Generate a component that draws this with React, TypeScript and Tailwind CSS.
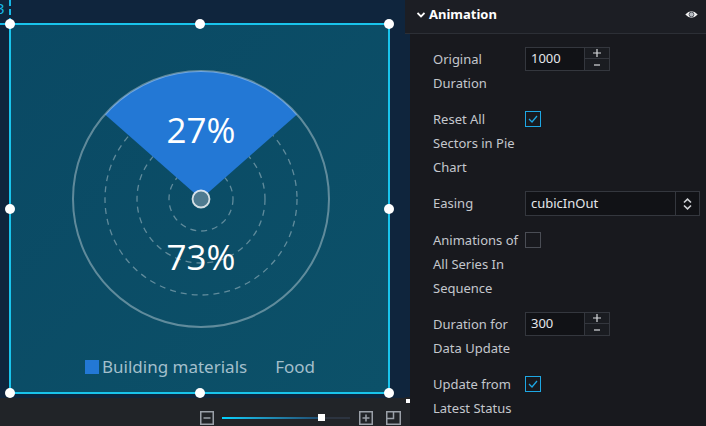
import React from 'react';

const Handle = ({ className }: { className: string }) => (
  <div className={`absolute w-[10px] h-[10px] rounded-full bg-white ${className}`} />
);

function NumberInput({ value }: { value: string }) {
  return (
    <div className="flex h-[24px] w-[85px] border border-[#34373e] bg-[#111216]">
      <div className="flex-1 flex items-center pl-[5px] text-[13px] text-[#e4e6ea]">{value}</div>
      <div className="w-[25px] flex flex-col border-l border-[#34373e] bg-[#1a1c21]">
        <div className="h-[11px] flex items-center justify-center border-b border-[#34373e]">
          <svg width="8" height="8" viewBox="0 0 8 8">
            <path d="M0 4 H8 M4 0 V8" stroke="#d8dadd" strokeWidth="1.2" />
          </svg>
        </div>
        <div className="flex-1 flex items-center justify-center">
          <svg width="6" height="2" viewBox="0 0 6 2">
            <path d="M0 1 H6" stroke="#d8dadd" strokeWidth="1.2" />
          </svg>
        </div>
      </div>
    </div>
  );
}

function Checkbox({ checked }: { checked?: boolean }) {
  return (
    <div
      className={`mt-[4px] w-[16px] h-[16px] border flex items-center justify-center ${
        checked ? 'border-[#1ea7e4]' : 'border-[#4a4d55]'
      }`}
    >
      {checked && (
        <svg width="10" height="8" viewBox="0 0 10 8">
          <path d="M1 4 L4 7 L9 1" fill="none" stroke="#1ea7e4" strokeWidth="1.3" />
        </svg>
      )}
    </div>
  );
}

function Row({ label, children }: { label: string[]; children: React.ReactNode }) {
  return (
    <div className="flex items-start">
      <div className="w-[92px] text-[13px] leading-[24px] text-[#c4c7cd] whitespace-nowrap">
        {label.map((l, i) => (
          <div key={i}>{l}</div>
        ))}
      </div>
      {children}
    </div>
  );
}

function Chart() {
  const cx = 190;
  const cy = 174;
  return (
    <svg width="375" height="328" className="block">
      <circle cx={cx} cy={cy} r="32" fill="none" stroke="rgba(255,255,255,0.35)" strokeWidth="1.3" strokeDasharray="6 5" />
      <circle cx={cx} cy={cy} r="64" fill="none" stroke="rgba(255,255,255,0.35)" strokeWidth="1.3" strokeDasharray="6 5" />
      <circle cx={cx} cy={cy} r="96" fill="none" stroke="rgba(255,255,255,0.35)" strokeWidth="1.3" strokeDasharray="6 5" />
      <path d="M190 174 L94 89.4 A128 128 0 0 1 286 89.4 Z" fill="#2378d5" />
      <circle cx={cx} cy={cy} r="128" fill="none" stroke="rgba(255,255,255,0.35)" strokeWidth="2" />
      <circle cx={cx} cy={cy} r="8.5" fill="#4f7b90" stroke="rgba(255,255,255,0.8)" strokeWidth="1.8" />
      <text x={cx} y="104" textAnchor="middle" dominantBaseline="central" fill="#ffffff" fontSize="35" fontFamily="'Open Sans', sans-serif">
        27%
      </text>
      <text x={cx} y="231" textAnchor="middle" dominantBaseline="central" fill="#ffffff" fontSize="35" fontFamily="'Open Sans', sans-serif">
        73%
      </text>
    </svg>
  );
}

export default function App() {
  return (
    <div className="relative flex w-[706px] h-[426px] overflow-hidden bg-[#191a20] font-['Noto_Sans',sans-serif]">
      {/* canvas column */}
      <div className="flex flex-col w-[405px] shrink-0">
        <div className="relative h-[398px] bg-[#0f253d] pl-[9px] pt-[23px]">
          <span className="absolute left-[-4px] top-[1px] text-[15px] leading-none text-[#16b8e6]">3</span>
          <div className="absolute left-[9px] top-0 h-[24px] border-l-2 border-dashed border-[#16b8e6]" />
          <div className="absolute left-0 top-[23px] w-[10px] border-t-2 border-dashed border-[#16b8e6]" />

          <div className="relative w-[381px] h-[371px] border-2 border-[#19c4ec] bg-gradient-to-br from-[#0a4964] to-[#0c5169]">
            <Chart />
            <div className="flex items-center pl-[74px] h-[28px] text-[17px] text-[#a3bfcc]">
              <div className="w-[14px] h-[14px] bg-[#2378d5] mr-[3px]" />
              <span>Building materials</span>
              <span className="ml-[28px]">Food</span>
            </div>

            <Handle className="left-[-6px] top-[-6px]" />
            <Handle className="left-[184px] top-[-6px]" />
            <Handle className="right-[-6px] top-[-6px]" />
            <Handle className="left-[-6px] top-[179px]" />
            <Handle className="right-[-6px] top-[179px]" />
            <Handle className="left-[-6px] bottom-[-6px]" />
            <Handle className="left-[184px] bottom-[-6px]" />
            <Handle className="right-[-6px] bottom-[-6px]" />
          </div>
        </div>

        {/* bottom toolbar */}
        <div className="flex-1 bg-[#212428] flex items-start pt-[13px] pl-[200px]">
          <svg width="14" height="14" viewBox="0 0 14 14">
            <rect x="0.75" y="0.75" width="12.5" height="12.5" fill="none" stroke="#9aa0a8" strokeWidth="1.5" />
            <path d="M3.5 7 H10.5" stroke="#9aa0a8" strokeWidth="1.5" />
          </svg>
          <div className="ml-[8px] mt-[6px] w-[128px] h-[2px] flex items-center relative">
            <div className="h-[2px] w-[96px] bg-gradient-to-r from-[#00d2ff] to-[#1e4f74]" />
            <div className="h-[2px] flex-1 bg-[#2c3440]" />
            <div className="absolute left-[96px] top-[-3px] w-[7px] h-[7px] bg-white" />
          </div>
          <svg width="14" height="14" viewBox="0 0 14 14" className="ml-[9px]">
            <rect x="0.75" y="0.75" width="12.5" height="12.5" fill="none" stroke="#9aa0a8" strokeWidth="1.5" />
            <path d="M3.5 7 H10.5 M7 3.5 V10.5" stroke="#9aa0a8" strokeWidth="1.5" />
          </svg>
          <svg width="15" height="14" viewBox="0 0 15 14" className="ml-[13px]">
            <rect x="0.75" y="0.75" width="13.5" height="12.5" fill="none" stroke="#9aa0a8" strokeWidth="1.5" />
            <path d="M7.5 1 V7.5 H1" fill="none" stroke="#9aa0a8" strokeWidth="1.5" />
          </svg>
        </div>
      </div>

      {/* settings panel */}
      <div className="flex-1 flex flex-col">
        <div className="h-[34px] shrink-0 flex items-center bg-[#1c1e24] border-b border-[#2c2f36] pl-[12px] pr-[8px] pb-[4px]">
          <svg width="8" height="6" viewBox="0 0 8 6" className="mr-[4px]">
            <path d="M0.5 1 L4 4.5 L7.5 1" fill="none" stroke="#ffffff" strokeWidth="1.8" />
          </svg>
          <span className="text-[13px] font-bold text-white">Animation</span>
          <svg width="13" height="9" viewBox="0 0 13 9" className="ml-auto">
            <path d="M0.3 4.5 Q6.5 -2 12.7 4.5 Q6.5 11 0.3 4.5 Z" fill="#f2f2f2" />
            <circle cx="6.5" cy="4.5" r="2.4" fill="#b8bcc2" stroke="#50545c" strokeWidth="1" />
          </svg>
        </div>
        <div className="flex-1 flex">
          <div className="w-[5px] flex flex-col">
            <div className="h-[363px] bg-[#0f253d]" />
            <div className="flex-1 bg-[#212428]" />
          </div>
          <div className="flex-1 flex flex-col gap-[12px] pt-[13px] pl-[23px] bg-[#18191e]">
            <Row label={['Original', 'Duration']}>
              <NumberInput value="1000" />
            </Row>
            <Row label={['Reset All', 'Sectors in Pie', 'Chart']}>
              <Checkbox checked />
            </Row>
            <Row label={['Easing']}>
              <div className="flex h-[25px] w-[175px] border border-[#34373e] bg-[#111216]">
                <div className="flex-1 flex items-center pl-[5px] text-[13px] text-[#e4e6ea]">cubicInOut</div>
                <div className="w-[24px] flex items-center justify-center border-l border-[#34373e]">
                  <svg width="9" height="12" viewBox="0 0 9 12">
                    <path d="M1 4.5 L4.5 1.2 L8 4.5 M1 7.5 L4.5 10.8 L8 7.5" fill="none" stroke="#d0d2d6" strokeWidth="1.6" />
                  </svg>
                </div>
              </div>
            </Row>
            <Row label={['Animations of', 'All Series In', 'Sequence']}>
              <Checkbox />
            </Row>
            <Row label={['Duration for', 'Data Update']}>
              <NumberInput value="300" />
            </Row>
            <Row label={['Update from', 'Latest Status']}>
              <Checkbox checked />
            </Row>
          </div>
        </div>
      </div>

      <div className="absolute left-[406px] top-[399px] w-[4px] h-[4px] bg-white" />
    </div>
  );
}
